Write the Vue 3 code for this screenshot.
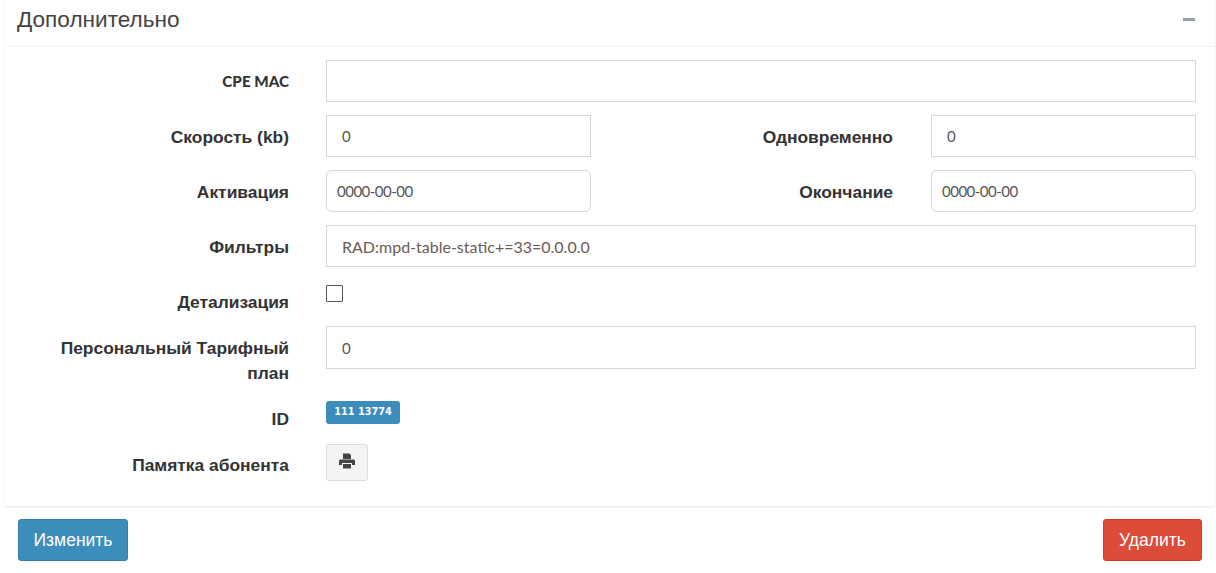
<script setup>
const sans = 'text'
</script>

<template>
  <div class="page">
    <section class="card">
      <header class="head">
        <h3 class="title">Дополнительно</h3>
        <button class="collapse" type="button" aria-label="Свернуть"><span class="minus"></span></button>
      </header>
      <div class="body">
        <div class="row">
          <label class="label latin">CPE MAC</label>
          <input class="field" :type="sans" value="" />
        </div>
        <div class="row">
          <label class="label">Скорость (kb)</label>
          <input class="field half num" :type="sans" value="0" />
          <label class="label side">Одновременно</label>
          <input class="field half num" :type="sans" value="0" />
        </div>
        <div class="row">
          <label class="label">Активация</label>
          <input class="field half date num" :type="sans" value="0000-00-00" />
          <label class="label side">Окончание</label>
          <input class="field half date num" :type="sans" value="0000-00-00" />
        </div>
        <div class="row">
          <label class="label">Фильтры</label>
          <input class="field filter" :type="sans" value="RAD:mpd-table-static+=33=0.0.0.0" />
        </div>
        <div class="row check-row">
          <label class="label">Детализация</label>
          <span class="check"></span>
        </div>
        <div class="row tall-row">
          <label class="label">Персональный Тарифный план</label>
          <input class="field tall num" :type="sans" value="0" />
        </div>
        <div class="row id-row">
          <label class="label">ID</label>
          <span class="badge">111 13774</span>
        </div>
        <div class="row print-row">
          <label class="label">Памятка абонента</label>
          <button class="print" type="button" aria-label="Печать">
            <svg width="16" height="16" viewBox="0 0 16 16"><path fill="#444" fill-rule="evenodd" d="M4 0.500h6.500L12 2v4H4zM1.500 6.500h13A1.500 1.500 0 0 1 16 8v4h-3V10H3v2H0V8a1.500 1.500 0 0 1 1.500-1.500zM4 11h8v4.500H4z"/></svg>
          </button>
        </div>
      </div>
    </section>
    <footer class="actions">
      <button class="btn primary" type="button">Изменить</button>
      <button class="btn danger" type="button">Удалить</button>
    </footer>
  </div>
</template>

<style scoped>
.page {
  width: 1216px;
  height: 573px;
  overflow: hidden;
  background: #fff;
  font-family: "Liberation Sans", Arial, sans-serif;
  color: #333;
}
.card {
  margin: 0 1px 0 5px;
  width: 1210px;
  height: 506px;
  box-sizing: border-box;
  background: #fff;
  box-shadow: 0 1px 2px rgba(0, 0, 0, 0.1), 0 0 1px rgba(0, 0, 0, 0.05);
}
.head {
  height: 47px;
  box-sizing: border-box;
  border-bottom: 1px solid #f4f4f4;
  display: flex;
  align-items: center;
  justify-content: space-between;
  padding: 0 20px 7px 12px;
}
.title {
  margin: 0;
  font-size: 22.600px;
  font-weight: 400;
  line-height: 40px;
  color: #444;
}
.collapse {
  border: 0;
  background: none;
  padding: 0;
  display: flex;
}
.minus {
  width: 12px;
  height: 3px;
  background: #97a0b3;
}
.body {
  padding: 13px 19px 0 0;
}
.row {
  display: flex;
  align-items: center;
  min-height: 42px;
  margin-bottom: 13px;
}
.label {
  width: 284px;
  flex: none;
  margin-right: 37px;
  text-align: right;
  font-size: 17.400px;
  font-weight: 700;
  line-height: 25px;
  color: #333;
  padding-top: 2px;
}
.latin {
  font-family: Lato, sans-serif;
  font-size: 15.200px;
  font-weight: 900;
  padding-top: 1px;
}
.side {
  width: 302px;
  margin-right: 38px;
}
.field {
  flex: 1;
  min-width: 0;
  height: 42px;
  box-sizing: border-box;
  border: 1px solid #d2d6de;
  border-radius: 0;
  outline: 0;
  padding: 0 15px;
  font-family: Lato, sans-serif;
  font-size: 16px;
  color: #555;
  background: #fff;
}
.num {
  font-size: 15px;
  letter-spacing: -0.500px;
}
.half {
  flex: none;
  width: 265px;
}
.date {
  border-radius: 6px;
  padding: 0 10px;
}
.filter {
  color: #6b5b53;
}
.check-row {
  height: 33px;
  min-height: 33px;
  align-items: flex-start;
}
.check-row .label {
  margin-top: 8px;
}
.check {
  width: 17px;
  height: 17px;
  margin-top: 5px;
  box-sizing: border-box;
  border: 1.500px solid #555;
  border-radius: 1px;
  background: #fff;
}
.tall-row {
  align-items: flex-start;
  margin-bottom: 15px;
}
.tall-row .label {
  box-sizing: border-box;
  padding-left: 40px;
  padding-top: 10px;
}
.tall {
  height: 43px;
}
.id-row {
  min-height: 23px;
  height: 23px;
  margin-bottom: 20px;
  align-items: flex-start;
}
.id-row .label {
  margin-top: 4px;
}
.badge {
  width: 74px;
  height: 23px;
  box-sizing: border-box;
  border-radius: 3px;
  background: #3c8dbc;
  color: #fff;
  font-family: "DejaVu Sans", sans-serif;
  font-size: 9.700px;
  font-weight: 700;
  line-height: 21px;
  text-align: center;
}
.print-row {
  min-height: 37px;
  margin-bottom: 0;
}
.print-row .label {
  padding-top: 6px;
}
.print {
  width: 42px;
  height: 37px;
  box-sizing: border-box;
  border: 1px solid #ddd;
  border-radius: 3px;
  background: #f4f4f4;
  display: flex;
  align-items: center;
  justify-content: center;
  padding: 0 0 4px;
}
.actions {
  display: flex;
  justify-content: space-between;
  padding: 13px 14px 0 18px;
}
.btn {
  height: 42px;
  box-sizing: border-box;
  border-radius: 3px;
  color: #fff;
  font-family: "Liberation Sans", Arial, sans-serif;
  font-size: 17.500px;
  padding: 0;
}
.primary {
  width: 110px;
  background: #3c8dbc;
  border: 1px solid #367fa9;
}
.danger {
  width: 99px;
  background: #dd4b39;
  border: 1px solid #d73925;
}
</style>
